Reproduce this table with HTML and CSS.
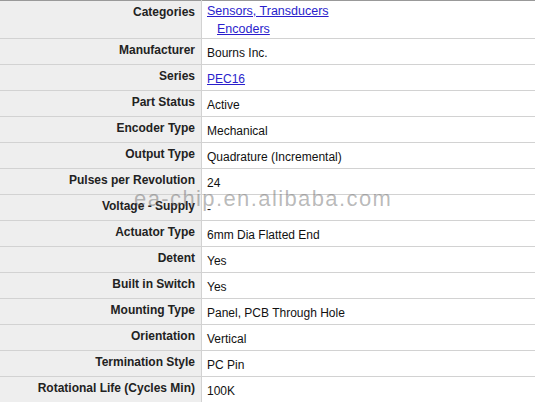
FILE: index.html
```html
<!DOCTYPE html>
<html>
<head>
<meta charset="utf-8">
<link rel="stylesheet" href="styles.css">
</head>
<body>
<div class="wrap">
<table class="spec">
  <tr class="first">
    <th>Categories</th>
    <td class="cats"><a href="#">Sensors, Transducers</a><br><a class="sub" href="#">Encoders</a></td>
  </tr>
  <tr><th>Manufacturer</th><td>Bourns Inc.</td></tr>
  <tr><th>Series</th><td><a href="#">PEC16</a></td></tr>
  <tr><th>Part Status</th><td>Active</td></tr>
  <tr><th>Encoder Type</th><td>Mechanical</td></tr>
  <tr><th>Output Type</th><td>Quadrature (Incremental)</td></tr>
  <tr><th>Pulses per Revolution</th><td>24</td></tr>
  <tr><th>Voltage - Supply</th><td>-</td></tr>
  <tr><th>Actuator Type</th><td>6mm Dia Flatted End</td></tr>
  <tr><th>Detent</th><td>Yes</td></tr>
  <tr><th>Built in Switch</th><td>Yes</td></tr>
  <tr><th>Mounting Type</th><td>Panel, PCB Through Hole</td></tr>
  <tr><th>Orientation</th><td>Vertical</td></tr>
  <tr><th>Termination Style</th><td>PC Pin</td></tr>
  <tr><th>Rotational Life (Cycles Min)</th><td>100K</td></tr>
</table>
<div class="watermark">ea-chip.en.alibaba.com</div>
</div>
</body>
</html>
```

FILE: styles.css
```css
html, body {
  margin: 0;
  padding: 0;
  background: #fff;
}
.wrap {
  position: relative;
  width: 535px;
  height: 402px;
  overflow: hidden;
}
.spec {
  border-collapse: collapse;
  width: 540px;
  font-family: "Liberation Sans", Arial, sans-serif;
  font-size: 12px;
  border-top: 1px solid #999;
}
.spec tr {
  height: 26px;
  border-bottom: 1px solid #d2d2d2;
}
.spec tr.first {
  height: 38px;
}
.spec th {
  width: 190px;
  background: #eeeeee;
  color: #222;
  font-weight: bold;
  text-align: right;
  vertical-align: top;
  padding: 4px 6px 0 5px;
  line-height: 14px;
  white-space: nowrap;
  border-right: 1px solid #d2d2d2;
}
.spec td {
  color: #111;
  vertical-align: middle;
  padding: 4px 6px 0 5px;
  line-height: 15px;
}
.spec td.cats {
  line-height: 18px;
  padding-top: 1px;
  font-size: 12.5px;
}
.spec a {
  color: #2a1ecc;
  text-decoration: underline;
}
.spec a.sub {
  margin-left: 10px;
}
.watermark {
  position: absolute;
  left: 134px;
  top: 186px;
  font-family: "Liberation Sans", Arial, sans-serif;
  font-size: 22px;
  line-height: 25px;
  letter-spacing: 1.4px;
  color: rgba(100, 100, 100, 0.45);
  white-space: nowrap;
}
```
